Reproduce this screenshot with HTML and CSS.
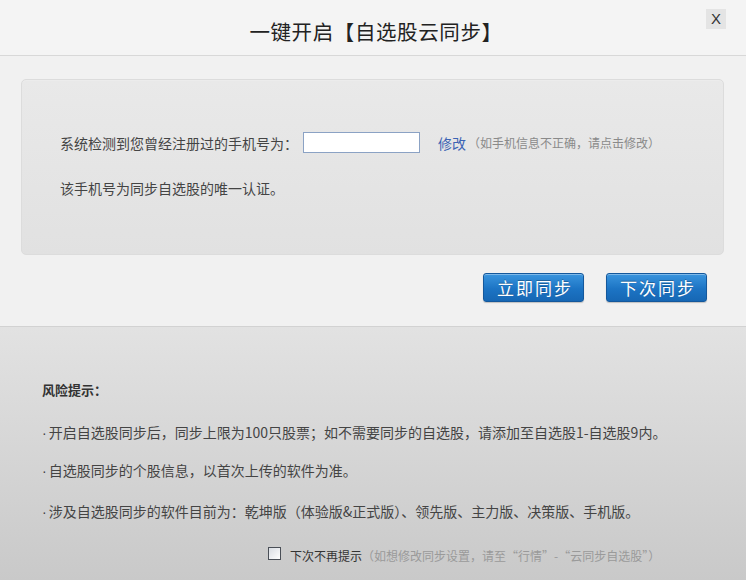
FILE: index.html
```html
<!DOCTYPE html>
<html lang="zh-CN">
<head>
<meta charset="utf-8">
<title>一键开启【自选股云同步】</title>
<link rel="stylesheet" href="styles.css">
</head>
<body>
<div class="dialog">
  <div class="header">
    <h1 class="title">一键开启【自选股云同步】</h1>
    <span class="close">X</span>
  </div>
  <div class="main">
    <div class="panel">
      <div class="row">
        <span class="label">系统检测到您曾经注册过的手机号为：</span>
        <input class="phone" type="text">
        <a class="edit">修改</a>
        <span class="hint">（如手机信息不正确，请点击修改）</span>
      </div>
      <div class="row row2">该手机号为同步自选股的唯一认证。</div>
    </div>
    <div class="actions">
      <button class="btn">立即同步</button>
      <button class="btn">下次同步</button>
    </div>
  </div>
  <div class="footer">
    <div class="risk-title">风险提示：</div>
    <div class="item i1"><span class="dot">·</span>开启自选股同步后，同步上限为100只股票；如不需要同步的自选股，请添加至自选股1-自选股9内。</div>
    <div class="item i2"><span class="dot">·</span>自选股同步的个股信息，以首次上传的软件为准。</div>
    <div class="item i3"><span class="dot">·</span>涉及自选股同步的软件目前为：乾坤版（体验版&amp;正式版）、领先版、主力版、决策版、手机版。</div>
    <div class="check-row">
      <span class="checkbox"></span>
      <span class="check-label">下次不再提示</span><span class="check-hint">（如想修改同步设置，请至“行情”-“云同步自选股”）</span>
    </div>
  </div>
</div>
</body>
</html>
```
FILE: styles.css
```css
* { box-sizing: border-box; }
html, body { margin: 0; padding: 0; }
body {
  width: 746px;
  height: 580px;
  overflow: hidden;
  font-family: "Noto Sans CJK SC", "Noto Sans", sans-serif;
  color: #444;
  background: #f2f2f2;
}
.dialog {
  width: 746px;
  height: 580px;
  display: flex;
  flex-direction: column;
}
.header {
  position: relative;
  height: 56px;
  border-bottom: 1px solid #d8d8d8;
  display: flex;
  justify-content: center;
  align-items: center;
  padding-top: 6px;
  background: #f4f4f4;
}
.title {
  margin: 0 0 0 6px;
  font-size: 20.5px;
  font-weight: normal;
  color: #222;
  letter-spacing: 0.6px;
}
.close {
  position: absolute;
  top: 9px;
  right: 20px;
  width: 20px;
  height: 20px;
  background: #e4e4e4;
  color: #333;
  font-family: "Liberation Sans", sans-serif;
  font-size: 15px;
  line-height: 20px;
  text-align: center;
}
.main {
  height: 270px;
  padding: 23px 22px 0 21px;
  background: #f1f1f1;
}
.panel {
  height: 176px;
  border-radius: 5px;
  background: linear-gradient(#e9e9e9, #e1e1e1);
  border: 1px solid #dcdcdc;
  box-shadow: inset 0 1px 0 #ececec;
  padding: 52px 0 0 38px;
}
.row {
  display: flex;
  align-items: center;
  height: 21px;
  font-size: 14px;
  color: #444;
  white-space: nowrap;
}
.row2 { margin-top: 24px; }
.phone {
  width: 117px;
  height: 21px;
  margin: 0 0 0 5px;
  border: 1px solid #8ba2c4;
  background: #fff;
  padding: 0;
}
.edit {
  margin-left: 18px;
  color: #3c64b4;
  font-size: 14px;
  cursor: pointer;
}
.hint {
  margin-left: 2px;
  font-size: 12px;
  color: #8a8a8a;
}
.actions {
  display: flex;
  justify-content: flex-end;
  gap: 22px;
  margin-top: 18px;
  padding-right: 17px;
}
.btn {
  width: 101px;
  height: 29px;
  border: 1px solid #14589c;
  border-radius: 3px;
  background: linear-gradient(#3a95de, #1c74c4 55%, #1667b4);
  box-shadow: inset 0 1px 0 rgba(255,255,255,0.35), 0 1px 1px rgba(0,0,0,0.2);
  color: #fff;
  font-family: "Noto Sans CJK SC", sans-serif;
  font-size: 17px;
  letter-spacing: 2px;
  line-height: 27px;
  padding: 0 0 0 3px;
  text-shadow: 0 -1px 0 rgba(0,0,0,0.25);
}
.footer {
  flex: 1;
  border-top: 1px solid #d2d2d2;
  background: linear-gradient(#e2e2e2, #c9c9c9);
  padding: 53px 0 0 42px;
  font-size: 14px;
  color: #444;
}
.risk-title {
  height: 20px;
  line-height: 20px;
  font-size: 13px;
  font-weight: bold;
  color: #333;
}
.item {
  height: 20px;
  line-height: 20px;
  white-space: nowrap;
  color: #444;
}
.dot {
  font-family: "Liberation Sans", sans-serif;
  margin-right: 2px;
}
.i1 { margin-top: 22px; }
.i2 { margin-top: 18px; }
.i3 { margin-top: 21px; }
.check-row {
  margin-top: 24px;
  margin-left: 226px;
  height: 20px;
  display: flex;
  align-items: center;
  white-space: nowrap;
}
.checkbox {
  width: 13px;
  height: 13px;
  border: 1px solid #4a4f57;
  background: linear-gradient(135deg, #d9dde3, #ffffff);
  margin-right: 9px;
  margin-top: -3px;
}
.check-label {
  font-size: 12px;
  color: #333;
}
.check-hint {
  font-size: 12px;
  color: #9a9a9a;
}
```
